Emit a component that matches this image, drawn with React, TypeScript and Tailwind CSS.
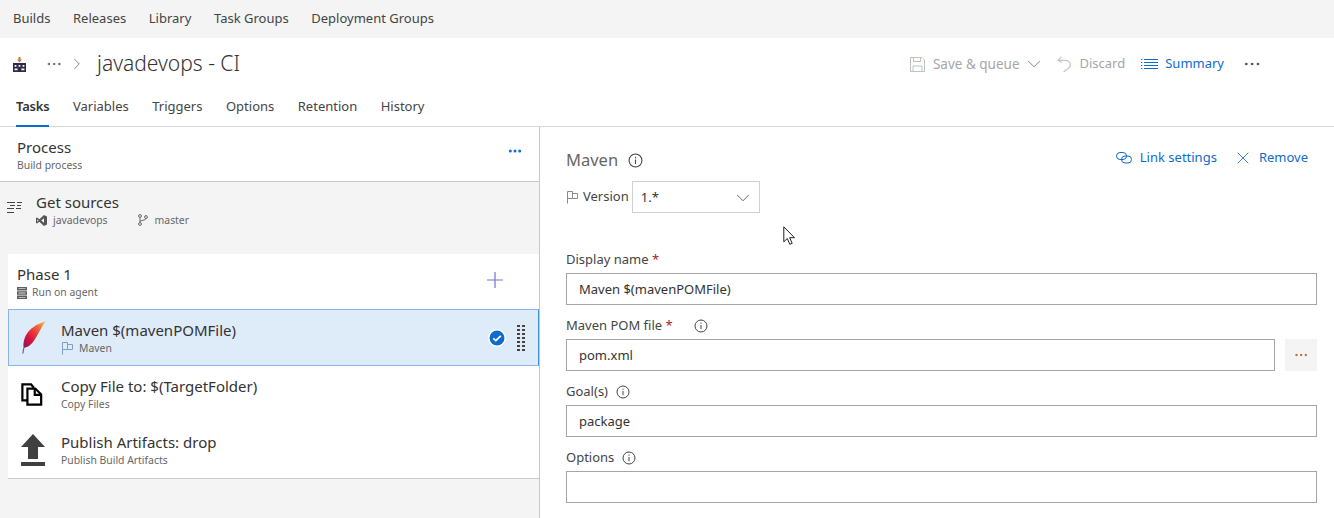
import { ChevronDown, ChevronRight, X, Ellipsis } from "lucide-react";

const FONT = "font-['Noto_Sans','Open_Sans',sans-serif]";

function InfoIcon({ size = 14 }: { size?: number }) {
  return (
    <svg width={size} height={size} viewBox="0 0 14 14" fill="none" stroke="#444" strokeWidth="1">
      <circle cx="7" cy="7" r="6" />
      <path d="M7 6v4.2M7 3.6v1.2" />
    </svg>
  );
}

function FlagIcon({ color = "#8a8a8a" }: { color?: string }) {
  return (
    <svg width="13" height="14" viewBox="0 0 13 14" fill="none" stroke={color} strokeWidth="1">
      <path d="M1.5 13.5V1.5h5v7h-5" />
      <path d="M6.5 3.5h5v5h-5" />
    </svg>
  );
}

function BuildIcon() {
  return (
    <svg width="13" height="15" viewBox="0 0 13 15" fill="#2b2b4a">
      <path d="M0 6h13v9H0z" />
      <path d="M5.5 0h2v2.500h1.500L6.500 5.500 4 2.500h1.500z" fill="#c07a3a" />
      <path d="M1.600 8h1.800v1.800H1.600zM5.600 8h1.800v1.800H5.600zM9.600 8h1.800v1.800H9.600zM1.600 11.500h3v1.800h-3zM8.400 11.500h3v1.800h-3z" fill="#fff" />
    </svg>
  );
}

function FloppyIcon() {
  return (
    <svg width="15" height="15" viewBox="0 0 15 15" fill="none" stroke="#b9c4bd" strokeWidth="1">
      <path d="M.5.5h11.500l2.500 2.500v11.500H.5z" />
      <path d="M3.500.5v4h7v-4M3 14.500V9h9v5.500" />
    </svg>
  );
}

function UndoIcon() {
  return (
    <svg width="15" height="17" viewBox="0 0 15 17" fill="none" stroke="#c4c4c4" strokeWidth="1.200">
      <path d="M4.500.8 1 4.400l3.800 2.200" />
      <path d="M1.400 4.400h6.400c3.400 0 5.600 2 5.600 4.400 0 2.600-2.400 4-4.400 5.200L6.600 16" />
    </svg>
  );
}

function SummaryIcon() {
  return (
    <svg width="17" height="12" viewBox="0 0 17 12" stroke="#0f6cc9" strokeWidth="1">
      <path d="M0 1.500h1.400M3 1.500h14M0 4.500h1.400M3 4.500h14M0 7.500h1.400M3 7.500h14M0 10.500h1.400M3 10.500h14" />
    </svg>
  );
}

function LinkIcon() {
  return (
    <svg width="16" height="12" viewBox="0 0 16 12" fill="none" stroke="#0f6cc9" strokeWidth="1">
      <rect x="0.500" y="0.500" width="10" height="7" rx="3.500" />
      <rect x="5.500" y="4" width="10" height="7" rx="3.500" />
    </svg>
  );
}

function PlusIcon() {
  return (
    <svg width="16" height="16" viewBox="0 0 16 16" stroke="#7474c8" strokeWidth="1.200">
      <path d="M8 0v16M0 8h16" />
    </svg>
  );
}

function SourcesIcon() {
  return (
    <svg width="15" height="14" viewBox="0 0 15 14" stroke="#444" strokeWidth="1">
      <path d="M0 1.500h8M10 1.500h5M3 4.500h5M10 4.500h4M0 7.500h7M9 7.500h5M0 11.500h7" />
    </svg>
  );
}

function VsIcon() {
  return (
    <svg width="11" height="11" viewBox="0 0 11 11" fill="#555">
      <path d="M8 0l3 1.400v8.200L8 11 3.400 6.700 1 8.500 0 8V3l1-.5 2.400 1.800zM8 3.200 5.200 5.500 8 7.800zM1.200 4.200v2.600L2.600 5.500z" fillRule="evenodd" />
    </svg>
  );
}

function BranchIcon() {
  return (
    <svg width="10" height="12" viewBox="0 0 10 12" fill="none" stroke="#666" strokeWidth="1">
      <circle cx="2" cy="2" r="1.400" />
      <circle cx="8" cy="3" r="1.400" />
      <circle cx="2" cy="10" r="1.400" />
      <path d="M2 3.500v5M8 4.500c0 2-6 1.500-6 3.500" />
    </svg>
  );
}

function AgentIcon() {
  return (
    <svg width="10" height="12" viewBox="0 0 10 12" fill="#5c5c5c">
      <path d="M0 0h10v3.400H0zM0 4.300h10v3.400H0zM0 8.600h10V12H0z" />
      <path d="M1.500 1.300h7v.8h-7zM1.500 5.600h7v.8h-7zM1.500 9.900h7v.8h-7z" fill="#d8d8d8" />
    </svg>
  );
}

function FeatherIcon() {
  return (
    <svg width="25" height="33" viewBox="0 0 25 33">
      <defs>
        <linearGradient id="feather" x1="0" y1="1" x2="1" y2="0">
          <stop offset="0" stopColor="#7a1a5e" />
          <stop offset="0.35" stopColor="#e0143c" />
          <stop offset="0.7" stopColor="#f0603a" />
          <stop offset="1" stopColor="#f7c04a" />
        </linearGradient>
      </defs>
      <path d="M24.500.5C16 2.500 8 8 4.500 15 2.800 19 2 23 2.600 27 6 26.500 9.500 24.500 12 21 16 16 19 8 24.500.5Z" fill="url(#feather)" />
      <path d="M2.800 27 1.800 32.500" stroke="#666" strokeWidth="1.200" />
    </svg>
  );
}

function CopyIcon() {
  return (
    <svg width="22" height="25" viewBox="0 0 24 25" fill="none" stroke="#000" strokeWidth="2.400">
      <path d="M7 19H1.500V1.500h9.500l3 3.500" />
      <path d="M7 6h8.500l6.500 6.500V23.500H7z" fill="#fff" />
      <path d="M15 6v7h7" />
    </svg>
  );
}

function UploadIcon() {
  return (
    <svg width="24" height="32" viewBox="0 0 24 32" fill="#404040">
      <path d="M12 0 24 13h-7v12H7V13H0z" />
      <path d="M0 28h24v4H0z" />
    </svg>
  );
}

function DragDots() {
  return (
    <div className="grid grid-cols-2 gap-x-[2px] gap-y-[2px]">
      {Array.from({ length: 14 }).map((_, i) => (
        <span key={i} className="w-[3px] h-[2px] bg-[#4a4040]" />
      ))}
    </div>
  );
}

function CheckBadge() {
  return (
    <svg width="18" height="18" viewBox="0 0 18 18">
      <circle cx="9" cy="9" r="9" fill="#fff" />
      <circle cx="9" cy="9" r="7.500" fill="#0f6cc9" />
      <path d="M5.300 9.300 7.800 11.600 12.800 6.800" fill="none" stroke="#fff" strokeWidth="1.800" />
    </svg>
  );
}

function TaskRow({
  icon,
  title,
  sub,
  selected,
  flag,
}: {
  icon: React.ReactNode;
  title: string;
  sub: string;
  selected?: boolean;
  flag?: boolean;
}) {
  return (
    <div
      className={`flex items-center pr-[13px] ${
        selected
          ? "h-[57px] bg-[#deecf9] border border-[#8ab4ee] border-r-[#3f8fe0]"
          : "h-[56px] border border-transparent"
      }`}
    >
      <div className="w-[52px] flex justify-start pl-[12px] shrink-0">{icon}</div>
      <div className="flex-1 min-w-0">
        <div className="text-[15px] leading-[20px] text-[#333]">{title}</div>
        <div className="mt-[1px] flex items-center gap-[5px] text-[10.400px] leading-[15px] text-[#666]">
          {flag && <FlagIcon color="#7f9fc4" />}
          {sub}
        </div>
      </div>
      {selected && (
        <div className="flex items-center gap-[11px]">
          <CheckBadge />
          <DragDots />
        </div>
      )}
    </div>
  );
}

function Field({ label, value, req, info }: { label: string; value: string; req?: boolean; info?: boolean }) {
  return (
    <div className="h-[66px]">
      <div className="flex items-center gap-[8px] h-[28px] pt-[1px] text-[13px] text-[#444]">
        <span>
          {label}
          {req && <span className="text-[#a4262c]"> *</span>}
        </span>
        {info && <InfoIcon size={14} />}
      </div>
      <div className="h-[32px] border border-[#a6a6a6] px-[12px] pt-[1px] flex items-center text-[13px] text-[#333]">{value}</div>
    </div>
  );
}

export default function App() {
  return (
    <div className={`${FONT} relative w-[1334px] h-[518px] overflow-hidden bg-white`}>
      <div className="h-[38px] bg-[#f4f4f4] flex items-center gap-[22.600px] pl-[13px] text-[13px] text-[#444]">
        {["Builds", "Releases", "Library", "Task Groups", "Deployment Groups"].map((t) => (
          <span key={t}>{t}</span>
        ))}
      </div>

      <div className="h-[52px] flex items-center pl-[13px] pr-[72px]">
        <BuildIcon />
        <Ellipsis size={18} strokeWidth={1.300} className="ml-[19px] text-[#555]" />
        <ChevronRight size={18} strokeWidth={1} className="ml-[5px] text-[#555]" />
        <span className="ml-[11px] text-[21px] text-[#333] font-light">javadevops - CI</span>
        <div className="ml-auto flex items-center text-[13.500px]">
          <FloppyIcon />
          <span className="ml-[8px] text-[#a6a6a6]">Save &amp; queue</span>
          <ChevronDown size={22} strokeWidth={1} className="ml-[3px] text-[#777]" />
          <span className="ml-[12px]">
            <UndoIcon />
          </span>
          <span className="ml-[8px] text-[13px] text-[#a6a6a6]">Discard</span>
          <span className="ml-[16px]">
            <SummaryIcon />
          </span>
          <span className="ml-[7px] text-[13px] text-[#0f6cc9]">Summary</span>
          <Ellipsis size={20} strokeWidth={1.200} className="ml-[18px] text-[#333]" />
        </div>
      </div>

      <div className="h-[37px] border-b border-[#d8d8d8] flex gap-[23.500px] pl-[16px] text-[13px] text-[#444]">
        {["Tasks", "Variables", "Triggers", "Options", "Retention", "History"].map((t, i) => (
          <div
            key={t}
            className={`h-[37px] pt-[7px] ${i === 0 ? "font-semibold text-[#333] border-b-[2px] border-[#0f6cc9] tracking-[-0.2px]" : ""}`}
          >
            {t}
          </div>
        ))}
      </div>

      <div className="flex h-[391px]">
        <div className="w-[540px] shrink-0 border-r border-[#c8c8c8] bg-[#f4f4f4]">
          <div className="h-[55px] bg-white border-b border-[#c8c8c8] pl-[17px] pr-[16px] pt-[10px] flex justify-between">
            <div>
              <div className="text-[15px] leading-[20px] text-[#333]">Process</div>
              <div className="mt-[1px] text-[10.400px] leading-[15px] text-[#666]">Build process</div>
            </div>
            <Ellipsis size={16} strokeWidth={2.500} className="text-[#0f6cc9] mt-[6px]" />
          </div>

          <div className="h-[72px] flex pl-[7px] pt-[10px]">
            <div className="mt-[9px]">
              <SourcesIcon />
            </div>
            <div className="ml-[14px]">
              <div className="text-[15px] leading-[20px] text-[#333]">Get sources</div>
              <div className="flex items-center text-[10.400px] leading-[16px] text-[#666]">
                <VsIcon />
                <span className="ml-[6px]">javadevops</span>
                <span className="ml-[30px]">
                  <BranchIcon />
                </span>
                <span className="ml-[7px]">master</span>
              </div>
            </div>
          </div>

          <div className="ml-[8px] bg-white border-b border-[#c8c8c8]">
            <div className="h-[55px] pl-[9px] pr-[36px] pt-[10px] flex justify-between items-start">
              <div>
                <div className="text-[15px] leading-[20px] text-[#333]">Phase 1</div>
                <div className="mt-[1px] flex items-center gap-[5px] text-[10.400px] leading-[15px] text-[#666]">
                  <AgentIcon />
                  Run on agent
                </div>
              </div>
              <div className="mt-[8px]">
                <PlusIcon />
              </div>
            </div>
            <TaskRow icon={<FeatherIcon />} title="Maven $(mavenPOMFile)" sub="Maven" selected flag />
            <TaskRow icon={<CopyIcon />} title="Copy File to: $(TargetFolder)" sub="Copy Files" />
            <TaskRow icon={<UploadIcon />} title="Publish Artifacts: drop" sub="Publish Build Artifacts" />
          </div>
        </div>

        <div className="flex-1 pl-[26px] pr-[17px]">
          <div className="flex justify-between pt-[20px] pr-[9px]">
            <div className="flex items-center gap-[10px] h-[26px]">
              <span className="text-[16.500px] text-[#666]">Maven</span>
              <InfoIcon size={15} />
            </div>
            <div className="flex items-center h-[22px] text-[13px] text-[#0f6cc9]">
              <LinkIcon />
              <span className="ml-[8px]">Link settings</span>
              <X size={20} strokeWidth={1} className="ml-[16px]" />
              <span className="ml-[6px]">Remove</span>
            </div>
          </div>
          <div className="flex items-center mt-[8px] h-[32px]">
            <FlagIcon />
            <span className="ml-[4px] text-[13px] text-[#444]">Version</span>
            <div className="ml-[3px] w-[128px] h-[32px] border border-[#d0d0d0] flex items-center justify-between pl-[8px] pr-[5px] pt-[1px] text-[13px] text-[#333]">
              1.*
              <ChevronDown size={22} strokeWidth={1} className="text-[#555]" />
            </div>
          </div>
          <div className="mt-[32px]">
            <Field label="Display name" value="Maven $(mavenPOMFile)" req />
            <div className="h-[66px]">
              <div className="flex items-center gap-[21px] h-[28px] pt-[1px] text-[13px] text-[#444]">
                <span>
                  Maven POM file<span className="text-[#a4262c]"> *</span>
                </span>
                <InfoIcon size={14} />
              </div>
              <div className="flex gap-[10px]">
                <div className="flex-1 h-[32px] border border-[#a6a6a6] px-[12px] pt-[1px] flex items-center text-[13px] text-[#333]">pom.xml</div>
                <div className="w-[32px] h-[32px] bg-[#f4f4f4] flex items-center justify-center">
                  <Ellipsis size={16} strokeWidth={1.500} className="text-[#a85a20]" />
                </div>
              </div>
            </div>
            <Field label="Goal(s)" value="package" info />
            <Field label="Options" value="" info />
          </div>
        </div>
      </div>

      {/* mouse pointer over the form */}
      <svg className="absolute left-[783px] top-[226px]" width="13" height="20" viewBox="0 0 13 20" fill="#fff" stroke="#222" strokeWidth="1">
        <path d="M.8.8v15l3.500-3.300 2.500 5.800 2.400-1-2.500-5.600h4.800z" />
      </svg>
    </div>
  );
}
